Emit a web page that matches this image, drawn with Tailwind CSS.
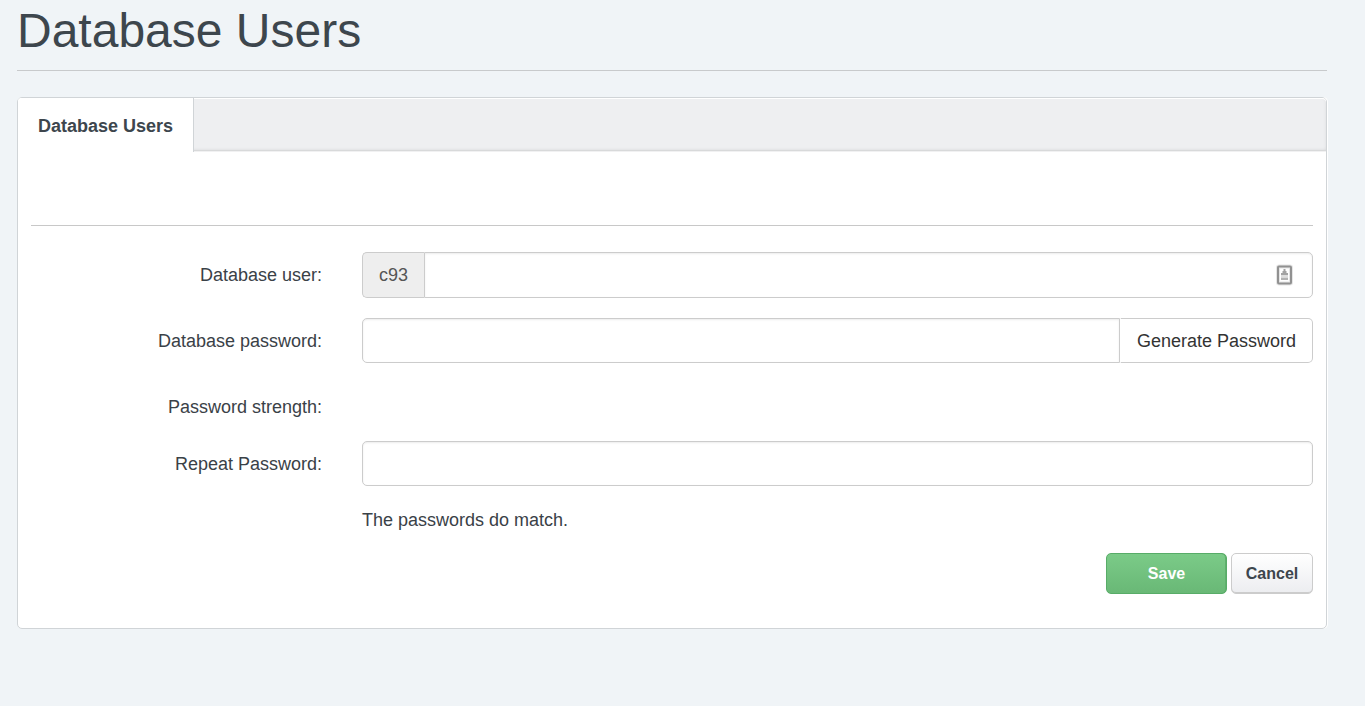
<!DOCTYPE html>
<html lang="en">
<head>
<meta charset="utf-8">
<meta name="viewport" content="width=device-width, initial-scale=1">
<title>Database Users</title>
<script src="https://cdn.jsdelivr.net/npm/@tailwindcss/browser@4"></script>
</head>
<body class="min-h-screen bg-[#f0f4f7] font-['Liberation_Sans',Arial,sans-serif] text-lg leading-6 text-[#3a4147]">
<main class="pl-[17px] pr-[38px]">
  <header class="border-b border-[#c8cacc] pt-1 pb-3">
    <h1 class="text-[48px] leading-[54px] text-[#3d464d]">Database Users</h1>
  </header>

  <section class="mt-[26px] rounded-[5px] border border-[#d0d4d7] bg-white shadow-[1px_0_0_#fff]">
    <nav class="flex h-[53px] rounded-t-[4px] border-b border-[#d8d9da] bg-[#eeeff1] shadow-[inset_0_1px_0_#fff,inset_0_-2px_3px_-1px_rgba(0,0,0,0.05),inset_-2px_0_3px_-1px_rgba(0,0,0,0.04),0_1px_0_#f1f1f2]">
      <a href="#users" class="-mb-0.5 flex items-center rounded-tl-[4px] border-r border-[#d0d4d7] bg-white px-5 pt-0.5 font-bold text-[#3d464d]">Database Users</a>
    </nav>

    <form id="users" class="px-[13px] pb-[34px]">
      <hr class="mt-[74px] mb-[26px] border-[#c8c8c8]">

      <div class="grid grid-cols-[291fr_951fr] items-center gap-x-10">
        <label for="user" class="text-right">Database user:</label>
        <div class="relative flex h-[46px]">
          <span class="flex items-center rounded-l-[5px] border border-r-0 border-[#ccc] bg-[#eee] px-4 text-[#555]">c93</span>
          <input id="user" type="text" class="min-w-0 flex-1 rounded-r-[5px] border border-[#ccc] bg-white px-4 shadow-[inset_0_1px_2px_rgba(0,0,0,0.08)]">
          <svg class="absolute top-3 right-5 h-[22px] w-[17px]" viewBox="0 0 17 22" fill="none" aria-hidden="true">
            <rect x="2" y="2.500" width="13" height="17" rx="1" stroke="#000" stroke-opacity=".1" stroke-width="4"/>
            <rect x="2" y="2.500" width="13" height="17" rx="1" stroke="#919191" stroke-width="2"/>
            <path d="M7.500 5h2v2h1v2h1.500v2H5V9h1.500V7h1z" fill="#a3a3a3"/>
            <path d="M5 11h7v2H5z" fill="#dedede"/>
            <path d="M5 13.500h7v2.500H5z" fill="#b3b3b3"/>
          </svg>
        </div>

        <label for="password" class="mt-5 text-right">Database password:</label>
        <div class="mt-5 flex h-[45px]">
          <input id="password" type="password" class="min-w-0 flex-1 rounded-l-[5px] border border-[#ccc] bg-white px-4 shadow-[inset_0_1px_2px_rgba(0,0,0,0.08)]">
          <button type="button" class="w-[193px] rounded-r-[5px] border border-[#ccc] border-l-white bg-white text-[#333]">Generate Password</button>
        </div>

        <span class="mt-8 text-right">Password strength:</span>
        <div></div>

        <label for="repeat" class="mt-[22px] text-right">Repeat Password:</label>
        <input id="repeat" type="password" class="mt-[22px] h-[45px] w-full rounded-[5px] border border-[#ccc] bg-white px-4 shadow-[inset_0_1px_2px_rgba(0,0,0,0.08)]">

        <p class="col-start-2 mt-[22px]">The passwords do match.</p>
      </div>

      <div class="mt-[21px] flex justify-end gap-1 text-base font-bold">
        <button type="submit" class="h-[41px] w-[121px] rounded-[5px] border border-[#58ac68] bg-linear-to-b from-[#7bcb88] to-[#69b876] text-white shadow-[inset_-1px_0_0_#5fb06c]">Save</button>
        <button type="button" class="h-[41px] w-[82px] rounded-[5px] border border-[#ccc] bg-linear-to-b from-white to-[#ecedf0] text-[#3d464d] shadow-[inset_0_-1px_0_#ccc]">Cancel</button>
      </div>
    </form>
  </section>
</main>
</body>
</html>
